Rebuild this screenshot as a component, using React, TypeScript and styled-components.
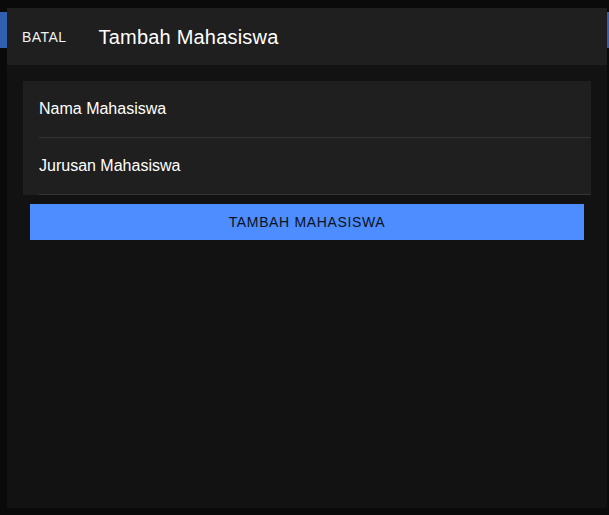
import styled, { createGlobalStyle } from "styled-components";

const GlobalStyle = createGlobalStyle`
  html, body {
    margin: 0;
    padding: 0;
    background: #0a0a0a;
    font-family: "Liberation Sans", Arial, sans-serif;
  }
`;

const Page = styled.div`
  width: 100%;
  height: 515px;
  padding-top: 12px;
  box-sizing: border-box;
  background: #0a0a0a;
`;

const PageToolbar = styled.div`
  height: 36px;
  background: #2f5fae;
`;

const Modal = styled.div`
  position: fixed;
  left: 7px;
  top: 8px;
  width: 600px;
  height: 500px;
  display: flex;
  flex-direction: column;
  background: #121212;
`;

const Header = styled.header`
  height: 57px;
  display: flex;
  align-items: center;
  padding-left: 14px;
  gap: 32px;
  background: #1f1f1f;
  flex-shrink: 0;
`;

const CancelButton = styled.button`
  border: none;
  background: transparent;
  padding: 0 0 0 1px;
  color: #f2f2f2;
  font-family: inherit;
  font-size: 14px;
  letter-spacing: 0.45px;
  line-height: 20px;
  text-transform: uppercase;
  cursor: pointer;
`;

const Title = styled.h1`
  margin: 0;
  font-size: 20px;
  font-weight: normal;
  letter-spacing: 0.2px;
  color: #ffffff;
  line-height: 24px;
`;

const Content = styled.div`
  padding: 16px;
  display: flex;
  flex-direction: column;
`;

const List = styled.div`
  background: #1f1f1f;
  display: flex;
  flex-direction: column;
`;

const Item = styled.div`
  padding-left: 16px;
  display: flex;
`;

const ItemInner = styled.div`
  flex: 1;
  height: 56px;
  display: flex;
  align-items: center;
  border-bottom: 1px solid #333333;
  color: #ffffff;
  font-size: 16px;
`;

const SubmitButton = styled.button`
  margin: 9px 7px 0;
  height: 36px;
  border: none;
  background: #4d8dff;
  color: #0b1220;
  font-family: inherit;
  font-size: 14px;
  letter-spacing: 0.65px;
  text-transform: uppercase;
  cursor: pointer;
`;

const fields = ["Nama Mahasiswa", "Jurusan Mahasiswa"];

const App = () => {
  return (
    <>
      <GlobalStyle />
      <Page>
        <PageToolbar />
      </Page>
      <Modal>
        <Header>
          <CancelButton>Batal</CancelButton>
          <Title>Tambah Mahasiswa</Title>
        </Header>
        <Content>
          <List>
            {fields.map((label) => (
              <Item key={label}>
                <ItemInner>{label}</ItemInner>
              </Item>
            ))}
          </List>
          <SubmitButton>Tambah Mahasiswa</SubmitButton>
        </Content>
      </Modal>
    </>
  );
};

export default App;
